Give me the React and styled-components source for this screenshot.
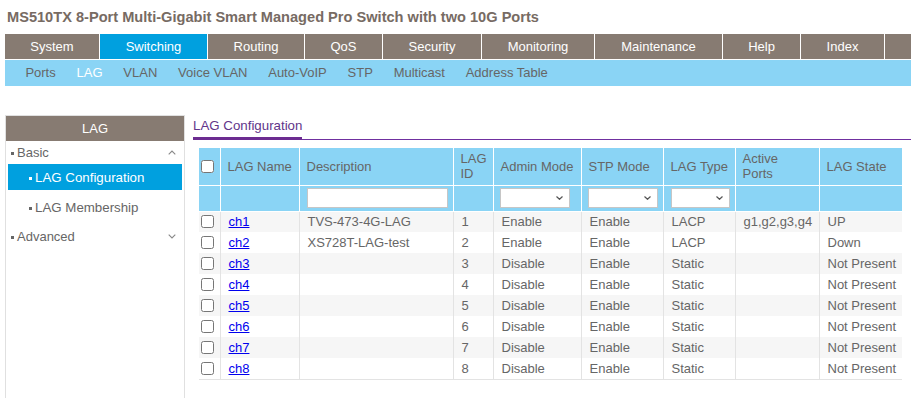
import React from "react";
import styled, { createGlobalStyle } from "styled-components";

const GlobalStyle = createGlobalStyle`
  html, body { margin: 0; padding: 0; background: #fff; }
  body { font-family: "Liberation Sans", Arial, sans-serif; font-size: 13px; color: #666; }
  #root { min-height: 100vh; }
`;

const Page = styled.div`
  display: flex;
  flex-direction: column;
  min-height: 100vh;
`;

const Title = styled.h1`
  margin: 9px 0 8px 7px;
  font-size: 14.6px;
  line-height: 17px;
  font-weight: bold;
  color: #776b63;
  white-space: nowrap;
`;

const MainNav = styled.nav`
  display: flex;
  margin-left: 5px;
  height: 25px;
  background: #877b72;
  border-bottom: 1px solid #fff;
`;

const NavTab = styled.div`
  flex: none;
  width: ${(p) => p.$w}px;
  box-sizing: border-box;
  border-right: 1px solid #fff;
  background: ${(p) => (p.$active ? "#00a0df" : "transparent")};
  color: #fff;
  font-size: 13px;
  line-height: 25px;
  text-align: center;
`;

const SubNav = styled.div`
  display: flex;
  margin-left: 5px;
  height: 26px;
  padding-left: 10px;
  background: #8ad4f5;
`;

const SubItem = styled.div`
  padding: 0 10.4px;
  line-height: 26px;
  font-size: 13px;
  color: ${(p) => (p.$active ? "#fff" : "#666")};
  white-space: nowrap;
`;

const Main = styled.div`
  flex: 1;
  display: flex;
  gap: 8px;
  padding: 29px 0 0 5px;
`;

const Sidebar = styled.aside`
  flex: none;
  width: 180px;
  box-sizing: border-box;
  border: 1px solid #e0e0e0;
  border-bottom: none;
`;

const SideHeader = styled.div`
  height: 25px;
  line-height: 25px;
  background: #877b72;
  color: #fff;
  text-align: center;
  font-size: 13px;
`;

const Bullet = styled.span`
  display: inline-block;
  width: 3px;
  height: 3px;
  margin: 2px 3px 0 0;
  background: ${(p) => (p.$light ? "#fff" : "#666")};
`;

const GroupLabel = styled.div`
  display: flex;
  align-items: center;
  height: 23px;
  margin-top: ${(p) => p.$mt || 0}px;
  padding: 0 8px 0 5px;
  color: #666;
  font-size: 13px;
`;

const GroupText = styled.span`
  flex: 1;
  display: flex;
  align-items: center;
`;

const Menu = styled.div`
  display: flex;
  flex-direction: column;
  gap: 4px;
  padding: 0 2px;
`;

const MenuItem = styled.div`
  display: flex;
  align-items: center;
  height: 26px;
  padding-left: 21px;
  background: ${(p) => (p.$active ? "#00a0df" : "transparent")};
  color: ${(p) => (p.$active ? "#fff" : "#666")};
  font-size: 13.3px;
`;

const Content = styled.section`
  flex: 1;
  min-width: 0;
`;

const TabBar = styled.div`
  display: flex;
  border-bottom: 1px solid #7030a0;
`;

const Tab = styled.div`
  height: 22px;
  line-height: 22px;
  margin-bottom: -1px;
  border-bottom: 3px solid #6c2c91;
  color: #62358a;
  font-size: 13.3px;
  white-space: nowrap;
`;

const Table = styled.table`
  margin: 8px 0 0 6px;
  width: 703px;
  table-layout: fixed;
  border-collapse: collapse;
  font-size: 13px;
`;

const HeadRow = styled.tr`
  height: ${(p) => p.$h}px;
`;

const Th = styled.th`
  padding: 0 3px 0 ${(p) => (p.$center ? 0 : p.$pl ?? 7)}px;
  background: #8ad4f5;
  border-left: 1px solid #fff;
  border-bottom: 1px solid #fff;
  color: #666;
  font-weight: normal;
  text-align: ${(p) => (p.$center ? "center" : "left")};
  vertical-align: middle;
  line-height: 15px;
  &:first-child { border-left: none; }
`;

const Row = styled.tr`
  height: 21px;
  background: ${(p) => (p.$odd ? "#f6f6f6" : "#fff")};
  &:last-child td { border-bottom: 1px solid #e3e3e3; }
`;

const Td = styled.td`
  padding: 0 3px 0 ${(p) => (p.$center ? 0 : 8)}px;
  border-left: 1px solid #e3e3e3;
  color: #666;
  text-align: ${(p) => (p.$center ? "center" : "left")};
  vertical-align: middle;
  white-space: nowrap;
  line-height: 15px;
  &:first-child { border-left: none; }
`;

const Check = styled.input.attrs({ type: "checkbox" })`
  display: block;
  margin: 0 auto;
  width: 13px;
  height: 13px;
`;

const Link = styled.a`
  color: #0000ee;
  text-decoration: underline;
`;

const TextInput = styled.input.attrs({ type: "text" })`
  display: block;
  box-sizing: border-box;
  width: 141px;
  height: 20px;
  margin: 0;
  border: 1px solid #c6c6c6;
  background: #fff;
  padding: 0 3px;
  outline: none;
`;

const SelectWrap = styled.div`
  position: relative;
  width: ${(p) => p.$w}px;
  height: 20px;
`;

const Select = styled.select`
  appearance: none;
  -webkit-appearance: none;
  display: block;
  box-sizing: border-box;
  width: 100%;
  height: 20px;
  margin: 0;
  border: 1px solid #c6c6c6;
  border-radius: 0;
  background: #fff;
  outline: none;
`;

const Caret = styled.svg`
  position: absolute;
  right: 7px;
  top: 8px;
  pointer-events: none;
`;

const Chevron = ({ up }) => (
  <svg width="8" height="5" viewBox="0 0 8 5">
    <path
      d={up ? "M0.7 4.3 L4 1 L7.3 4.3" : "M0.7 0.7 L4 4 L7.3 0.7"}
      fill="none"
      stroke="#888"
      strokeWidth="1.1"
    />
  </svg>
);

const DropSelect = ({ w }) => (
  <SelectWrap $w={w}>
    <Select defaultValue="">
      <option value=""></option>
    </Select>
    <Caret width="7" height="4" viewBox="0 0 7 4">
      <path d="M0.5 0.5 L3.5 3.3 L6.5 0.5" fill="none" stroke="#555" strokeWidth="1.2" />
    </Caret>
  </SelectWrap>
);

const tabs = [
  ["System", 95],
  ["Switching", 108, true],
  ["Routing", 97],
  ["QoS", 78],
  ["Security", 99],
  ["Monitoring", 113],
  ["Maintenance", 128],
  ["Help", 78],
  ["Index", 84],
];

const subItems = ["Ports", "LAG", "VLAN", "Voice VLAN", "Auto-VoIP", "STP", "Multicast", "Address Table"];

const cols = [21, 79, 154, 40, 88, 82, 72, 84, 83];

const rows = [
  ["ch1", "TVS-473-4G-LAG", "1", "Enable", "Enable", "LACP", "g1,g2,g3,g4", "UP"],
  ["ch2", "XS728T-LAG-test", "2", "Enable", "Enable", "LACP", "", "Down"],
  ["ch3", "", "3", "Disable", "Enable", "Static", "", "Not Present"],
  ["ch4", "", "4", "Disable", "Enable", "Static", "", "Not Present"],
  ["ch5", "", "5", "Disable", "Enable", "Static", "", "Not Present"],
  ["ch6", "", "6", "Disable", "Enable", "Static", "", "Not Present"],
  ["ch7", "", "7", "Disable", "Enable", "Static", "", "Not Present"],
  ["ch8", "", "8", "Disable", "Enable", "Static", "", "Not Present"],
];

export default function App() {
  return (
    <Page>
      <GlobalStyle />
      <Title>MS510TX 8-Port Multi-Gigabit Smart Managed Pro Switch with two 10G Ports</Title>
      <MainNav>
        {tabs.map(([label, w, active]) => (
          <NavTab key={label} $w={w} $active={active}>
            {label}
          </NavTab>
        ))}
      </MainNav>
      <SubNav>
        {subItems.map((s) => (
          <SubItem key={s} $active={s === "LAG"}>
            {s}
          </SubItem>
        ))}
      </SubNav>
      <Main>
        <Sidebar>
          <SideHeader>LAG</SideHeader>
          <GroupLabel>
            <GroupText>
              <Bullet />
              Basic
            </GroupText>
            <Chevron up />
          </GroupLabel>
          <Menu>
            <MenuItem $active>
              <Bullet $light />
              LAG Configuration
            </MenuItem>
            <MenuItem>
              <Bullet />
              LAG Membership
            </MenuItem>
          </Menu>
          <GroupLabel $mt={5}>
            <GroupText>
              <Bullet />
              Advanced
            </GroupText>
            <Chevron />
          </GroupLabel>
        </Sidebar>
        <Content>
          <TabBar>
            <Tab>LAG Configuration</Tab>
          </TabBar>
          <Table>
            <colgroup>
              {cols.map((w, i) => (
                <col key={i} style={{ width: w }} />
              ))}
            </colgroup>
            <thead>
              <HeadRow $h={37}>
                <Th $center>
                  <Check />
                </Th>
                <Th>LAG Name</Th>
                <Th>Description</Th>
                <Th>
                  LAG
                  <br />
                  ID
                </Th>
                <Th>Admin Mode</Th>
                <Th>STP Mode</Th>
                <Th>LAG Type</Th>
                <Th>
                  Active
                  <br />
                  Ports
                </Th>
                <Th>LAG State</Th>
              </HeadRow>
              <HeadRow $h={26}>
                <Th $center />
                <Th />
                <Th>
                  <TextInput />
                </Th>
                <Th />
                <Th $pl={6}>
                  <DropSelect w={70} />
                </Th>
                <Th $pl={6}>
                  <DropSelect w={70} />
                </Th>
                <Th>
                  <DropSelect w={59} />
                </Th>
                <Th />
                <Th />
              </HeadRow>
            </thead>
            <tbody>
              {rows.map((r, i) => (
                <Row key={r[0]} $odd={i % 2 === 0}>
                  <Td $center>
                    <Check />
                  </Td>
                  <Td>
                    <Link href="#">{r[0]}</Link>
                  </Td>
                  {r.slice(1).map((c, j) => (
                    <Td key={j}>{c}</Td>
                  ))}
                </Row>
              ))}
            </tbody>
          </Table>
        </Content>
      </Main>
    </Page>
  );
}
